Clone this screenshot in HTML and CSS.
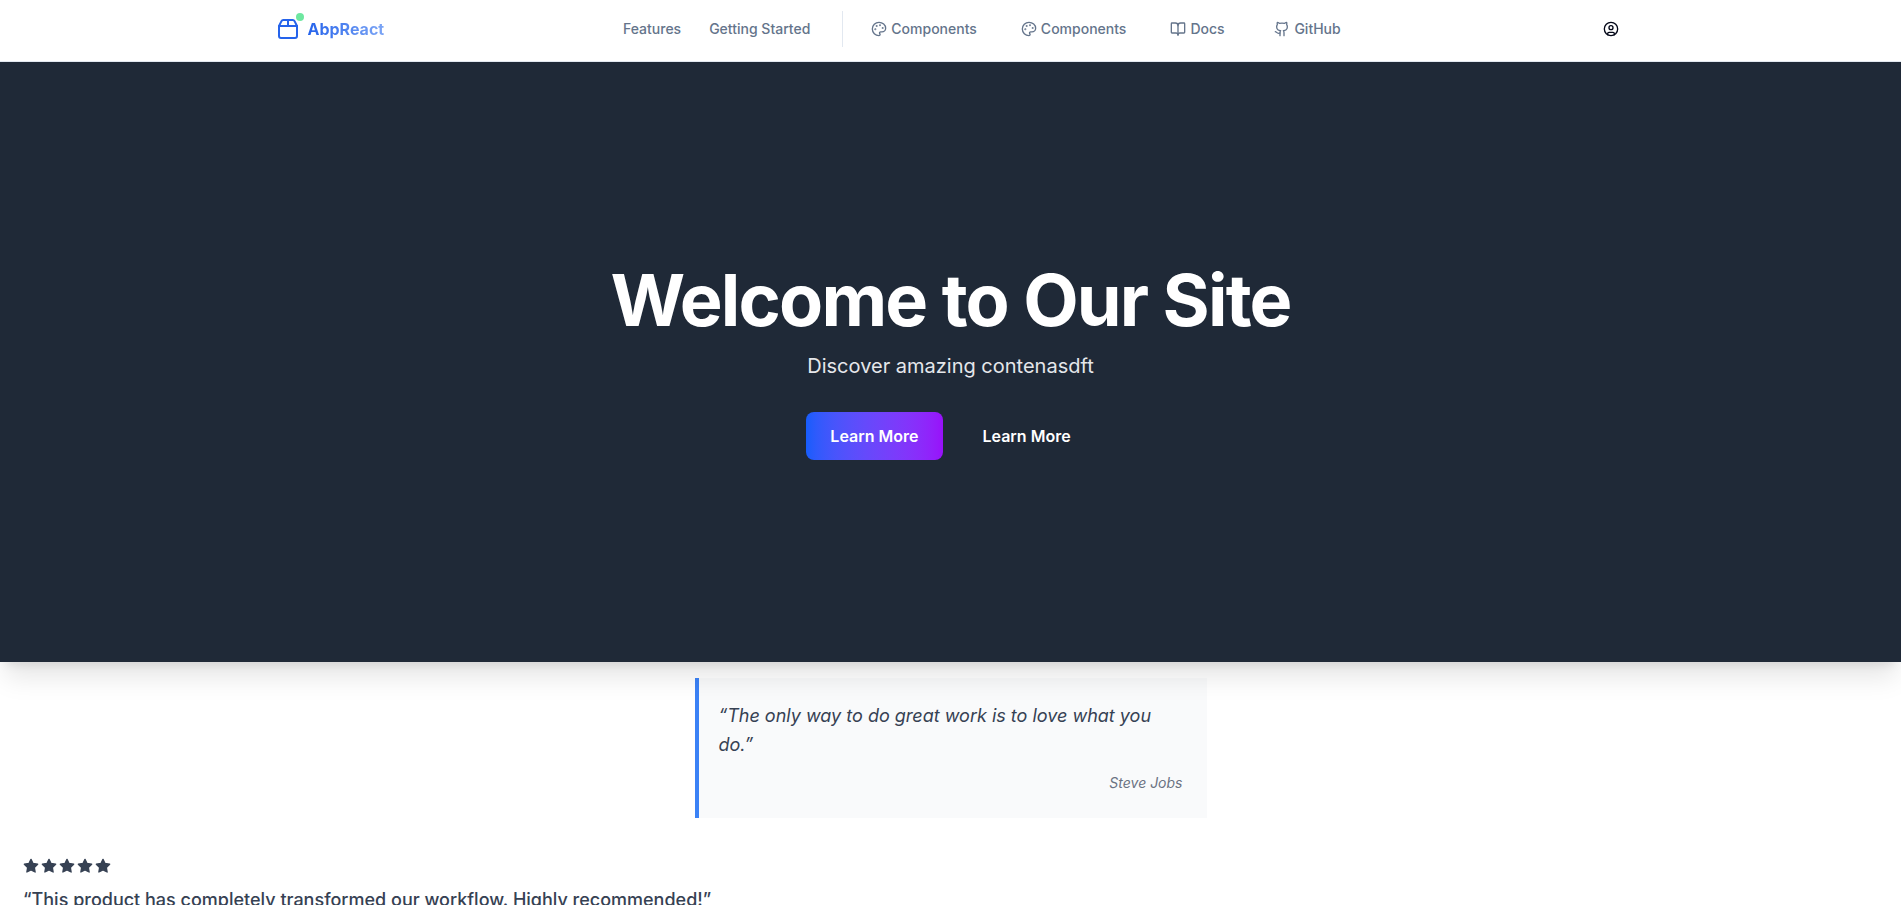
FILE: index.html
```html
<!DOCTYPE html>
<html lang="en">
<head>
<meta charset="utf-8">
<meta name="viewport" content="width=device-width, initial-scale=1">
<title>AbpReact</title>
<link rel="stylesheet" href="styles.css">
</head>
<body>
<svg class="sprite" aria-hidden="true">
  <symbol id="palette" viewBox="0 0 24 24"><path d="M12 2C6.500 2 2 6.500 2 12s4.500 10 10 10c.926 0 1.648-.746 1.648-1.688 0-.437-.18-.835-.437-1.125-.29-.289-.438-.652-.438-1.125a1.640 1.640 0 0 1 1.668-1.668h1.996c3.051 0 5.555-2.503 5.555-5.554C21.965 6.012 17.461 2 12 2z"/><circle cx="13.500" cy="6.500" r=".5" fill="currentColor"/><circle cx="17.500" cy="10.500" r=".5" fill="currentColor"/><circle cx="8.500" cy="7.500" r=".5" fill="currentColor"/><circle cx="6.500" cy="12.500" r=".5" fill="currentColor"/></symbol>
  <symbol id="book" viewBox="0 0 24 24"><path d="M12 7v14"/><path d="M3 18a1 1 0 0 1-1-1V4a1 1 0 0 1 1-1h5a4 4 0 0 1 4 4 4 4 0 0 1 4-4h5a1 1 0 0 1 1 1v13a1 1 0 0 1-1 1h-6a3 3 0 0 0-3 3 3 3 0 0 0-3-3z"/></symbol>
  <symbol id="github" viewBox="0 0 24 24"><path d="M15 22v-4a4.800 4.800 0 0 0-1-3.500c3 0 6-2 6-5.500.08-1.250-.27-2.480-1-3.500.28-1.150.28-2.350 0-3.500 0 0-1 0-3 1.500-2.640-.5-5.360-.5-8 0C6 2 5 2 5 2c-.3 1.150-.3 2.350 0 3.500A5.403 5.403 0 0 0 4 9c0 3.500 3 5.500 6 5.500-.39.490-.68 1.050-.85 1.650-.17.600-.22 1.230-.15 1.850v4"/><path d="M9 18c-4.510 2-5-2-7-2"/></symbol>
  <symbol id="star" viewBox="0 0 24 24"><path fill="currentColor" d="M12 2l3.090 6.260L22 9.270l-5 4.870 1.180 6.880L12 17.770l-6.180 3.250L7 14.140 2 9.270l6.910-1.010z"/></symbol>
</svg>
<header class="header">
  <div class="header-inner">
    <a class="brand" href="#">
      <span class="brand-mark">
        <svg class="brand-icon" viewBox="0 0 24 24"><path d="M3 9h18v10a2 2 0 0 1-2 2H5a2 2 0 0 1-2-2z"/><path d="M3 9l2.450-4.900A2 2 0 0 1 7.240 3h9.520a2 2 0 0 1 1.800 1.100L21 9"/><path d="M12 3v6"/></svg>
        <span class="brand-dot"></span>
      </span>
      <span class="brand-name">AbpReact</span>
    </a>
    <nav class="nav" aria-label="Main">
      <div class="nav-group nav-sections">
        <a class="nav-link" href="#">Features</a>
        <a class="nav-link" href="#">Getting Started</a>
      </div>
      <div class="nav-group nav-resources">
        <a class="nav-link" href="#"><svg class="icon"><use href="#palette"/></svg>Components</a>
        <a class="nav-link" href="#"><svg class="icon"><use href="#palette"/></svg>Components</a>
        <a class="nav-link" href="#"><svg class="icon"><use href="#book"/></svg>Docs</a>
        <a class="nav-link" href="#"><svg class="icon"><use href="#github"/></svg>GitHub</a>
      </div>
    </nav>
    <button class="account" type="button" aria-label="Account">
      <svg class="icon" viewBox="0 0 24 24"><circle cx="12" cy="12" r="10"/><circle cx="12" cy="10" r="3"/><path d="M7 20.662V19a2 2 0 0 1 2-2h6a2 2 0 0 1 2 2v1.662"/></svg>
    </button>
  </div>
</header>
<main>
  <section class="hero">
    <h1 class="hero-title">Welcome to Our Site</h1>
    <p class="hero-text">Discover amazing contenasdft</p>
    <div class="hero-actions">
      <a class="button button-primary" href="#">Learn More</a>
      <a class="button" href="#">Learn More</a>
    </div>
  </section>
  <blockquote class="quote">
    <p class="quote-text">“The only way to do great work is to love what you do.”</p>
    <cite class="quote-author">Steve Jobs</cite>
  </blockquote>
  <section class="testimonial">
    <div class="stars" role="img" aria-label="5 out of 5 stars">
      <svg class="icon"><use href="#star"/></svg><svg class="icon"><use href="#star"/></svg><svg class="icon"><use href="#star"/></svg><svg class="icon"><use href="#star"/></svg><svg class="icon"><use href="#star"/></svg>
    </div>
    <p class="testimonial-text">“This product has completely transformed our workflow. Highly recommended!”</p>
  </section>
</main>
</body>
</html>
```

FILE: styles.css
```css
* { box-sizing: border-box; }
body {
  margin: 0;
  overflow: hidden;
  height: 100vh;
  background: #fff;
  color: #364153;
  font-family: Inter, "Liberation Sans", sans-serif;
  font-size: 16px;
}
h1, p, blockquote { margin: 0; }
a { color: inherit; text-decoration: none; }
.sprite { position: absolute; width: 0; height: 0; }
.icon {
  width: 16px;
  height: 16px;
  flex: none;
  fill: none;
  stroke: currentColor;
  stroke-width: 2;
  stroke-linecap: round;
  stroke-linejoin: round;
}
.header { border-bottom: 1px solid #e2e8f0; }
.header-inner {
  display: flex;
  align-items: center;
  justify-content: space-between;
  max-width: 1400px;
  margin: 0 auto;
  padding: 11px 23px 14px 25px;
}
.brand { display: flex; align-items: center; gap: 8px; }
.brand-mark { position: relative; display: flex; }
.brand-icon {
  width: 24px;
  height: 24px;
  fill: none;
  stroke: #2563eb;
  stroke-width: 2;
  stroke-linecap: round;
  stroke-linejoin: round;
}
.brand-dot {
  position: absolute;
  top: -4px;
  right: -4px;
  width: 8px;
  height: 8px;
  border-radius: 50%;
  background: #6ee7a0;
}
.brand-name {
  font-weight: 700;
  line-height: 24px;
  background: linear-gradient(90deg, #2563eb, #7ca5f5);
  background-clip: text;
  color: transparent;
}
.nav { display: flex; padding-right: 16px; }
.nav-group { display: flex; align-items: center; height: 36px; }
.nav-sections { gap: 28px; padding-right: 32px; border-right: 1px solid #e2e8f0; }
.nav-resources { gap: 44px; padding-left: 28px; }
.nav-link {
  display: flex;
  align-items: center;
  gap: 4px;
  color: #64748b;
  font-size: 14px;
  font-weight: 500;
  line-height: 20px;
}
.nav-resources .nav-link { min-width: 60px; }
.account {
  display: flex;
  padding: 8px;
  border: 0;
  background: none;
  color: #020617;
}
.hero {
  display: flex;
  flex-direction: column;
  align-items: center;
  justify-content: center;
  min-height: 600px;
  padding: 24px;
  background: #1f2937;
  color: #fff;
  text-align: center;
  position: relative;
  box-shadow: 0 20px 25px -5px rgba(0, 0, 0, .1), 0 8px 10px -6px rgba(0, 0, 0, .1);
}
.hero-title { font-size: 72px; font-weight: 700; line-height: 72px; letter-spacing: -0.025em; }
.hero-text { margin-top: 16px; color: #e5e7eb; font-size: 20px; line-height: 28px; }
.hero-actions { display: flex; gap: 16px; margin-top: 32px; }
.button { padding: 12px 24px; border-radius: 8px; font-weight: 600; line-height: 24px; }
.button-primary { background: linear-gradient(90deg in oklab, #155dfc, #9810fa); }
.quote {
  max-width: 512px;
  margin: 16px auto 0;
  padding: 23px 24px 25px 20px;
  border-left: 4px solid #3b82f6;
  background: #f9fafb;
}
.quote-text { font-size: 18px; font-style: italic; line-height: 29px; }
.quote-author {
  display: block;
  margin-top: 14px;
  color: #6a7282;
  font-size: 14px;
  line-height: 20px;
  text-align: right;
}
.testimonial { padding: 40px 23px 24px; }
.stars { display: flex; gap: 2px; }
.testimonial-text { margin-top: 11px; font-size: 18px; font-weight: 500; line-height: 29px; }
```
